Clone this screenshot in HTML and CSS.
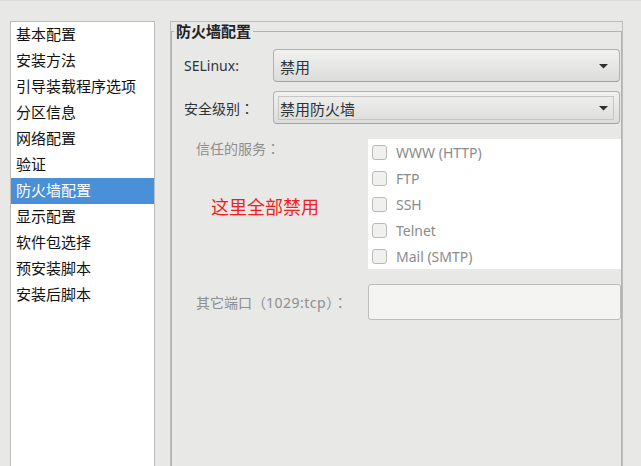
FILE: index.html
```html
<!DOCTYPE html>
<html lang="zh-CN">
<head>
<meta charset="utf-8">
<title>防火墙配置</title>
<link rel="stylesheet" href="styles.css">
</head>
<body>
<div class="window">
  <ul class="nav">
    <li>基本配置</li>
    <li>安装方法</li>
    <li>引导装载程序选项</li>
    <li>分区信息</li>
    <li>网络配置</li>
    <li>验证</li>
    <li class="selected">防火墙配置</li>
    <li>显示配置</li>
    <li>软件包选择</li>
    <li>预安装脚本</li>
    <li>安装后脚本</li>
  </ul>
  <div class="frame">
    <fieldset class="group">
      <legend>防火墙配置</legend>
      <div class="row first">
        <span class="label">SELinux:</span>
        <div class="combo">
          <div class="combo-inner">
            <span>禁用</span>
            <svg class="arrow" width="9" height="5" viewBox="0 0 9 5"><path d="M0 0 H9 L4.5 4.6 Z" fill="#2e2e2e"/></svg>
          </div>
        </div>
      </div>
      <div class="row">
        <span class="label">安全级别<span class="punct" lang="ja">：</span></span>
        <div class="combo">
          <div class="combo-inner focused">
            <span>禁用防火墙</span>
            <svg class="arrow" width="9" height="5" viewBox="0 0 9 5"><path d="M0 0 H9 L4.5 4.6 Z" fill="#2e2e2e"/></svg>
          </div>
        </div>
      </div>
      <div class="services">
        <div class="svc-label">
          <span class="dim">信任的服务<span class="punct" lang="ja">：</span></span>
          <span class="note">这里全部禁用</span>
        </div>
        <ul class="checklist">
          <li><span class="check"></span>WWW (HTTP)</li>
          <li><span class="check"></span>FTP</li>
          <li><span class="check"></span>SSH</li>
          <li><span class="check"></span>Telnet</li>
          <li><span class="check"></span>Mail (SMTP)</li>
        </ul>
      </div>
      <div class="port">
        <span class="dim port-label">其它端口（<span class="latin">1029:tcp</span>）<span class="punct" lang="ja">：</span></span>
        <div class="entry"></div>
      </div>
    </fieldset>
  </div>
</div>
</body>
</html>
```
FILE: styles.css
```css
* { box-sizing: border-box; }
html, body { margin: 0; padding: 0; }
body {
  width: 641px;
  height: 466px;
  overflow: hidden;
  background: #e8e8e7;
  border-top: 1px solid #dddddc;
  font-family: "Noto Sans", "Noto Sans CJK SC", sans-serif;
}
.window {
  display: flex;
  align-items: flex-start;
  gap: 15px;
  padding: 20px 0 0 10px;
}
.nav {
  width: 145px;
  height: 470px;
  margin: 0;
  padding: 0;
  list-style: none;
  background: #fff;
  border: 1px solid #bcbcbc;
}
.nav li {
  height: 26px;
  line-height: 25px;
  padding-left: 5px;
  font-size: 15px;
  color: #111;
  white-space: nowrap;
}
.nav li.selected {
  background: #4a90d9;
  color: #fff;
}
.frame {
  width: 453px;
  height: 470px;
  border: 1px solid #bdbdbd;
  border-bottom: none;
}
.group {
  margin: 0;
  padding: 0;
  min-width: 0;
  height: 460px;
  border: 1px solid #b3b3b3;
}
.group legend {
  margin-left: 2px;
  padding: 0 2px;
  font-size: 15px;
  line-height: 18px;
  font-weight: bold;
  color: #222;
}
.row {
  display: flex;
  align-items: center;
  padding-left: 12px;
  margin-top: 9px;
}
.label {
  width: 89px;
  font-size: 14px;
  color: #2e3436;
  white-space: nowrap;
}
.punct {
  font-family: "Noto Sans CJK JP", sans-serif;
}
.latin {
  letter-spacing: 0.5px;
}
.combo {
  width: 347px;
  height: 33px;
  padding: 4px 5px 3px 4px;
  border: 1px solid #b1b1b1;
  border-bottom-color: #a2a2a2;
  border-radius: 4px;
  background: linear-gradient(#f1f1f0, #dcdcdb);
}
.combo-inner {
  height: 100%;
  display: flex;
  align-items: center;
  justify-content: space-between;
  padding: 0 5px 0 1px;
  border: 1px solid transparent;
  font-size: 15px;
  color: #2e3436;
}
.combo-inner.focused {
  border-color: #c6c6c5;
}
.arrow { display: block; }
.services {
  display: flex;
  margin-top: 15px;
  padding-left: 24px;
}
.svc-label {
  width: 172px;
  display: flex;
  flex-direction: column;
}
.dim {
  font-size: 14px;
  line-height: 18px;
  color: #8e8e8e;
  white-space: nowrap;
}
.note {
  margin: 38px 0 0 15px;
  font-size: 18px;
  line-height: 22px;
  color: #f01e1e;
}
.checklist {
  width: 253px;
  margin: 0;
  padding: 0;
  list-style: none;
  background: #fff;
}
.checklist li {
  height: 26px;
  display: flex;
  align-items: center;
  gap: 9px;
  padding-left: 4px;
  font-size: 14px;
  color: #8b8b8b;
}
.check {
  width: 15px;
  height: 15px;
  border: 1px solid #bababa;
  border-radius: 3px;
  background: #f0f0ef;
}
.port {
  display: flex;
  align-items: center;
  margin-top: 15px;
  padding-left: 24px;
}
.port-label { width: 172px; }
.entry {
  width: 253px;
  height: 36px;
  background: #f4f4f2;
  border: 1px solid #bcbcbc;
  border-radius: 3px;
}
```
